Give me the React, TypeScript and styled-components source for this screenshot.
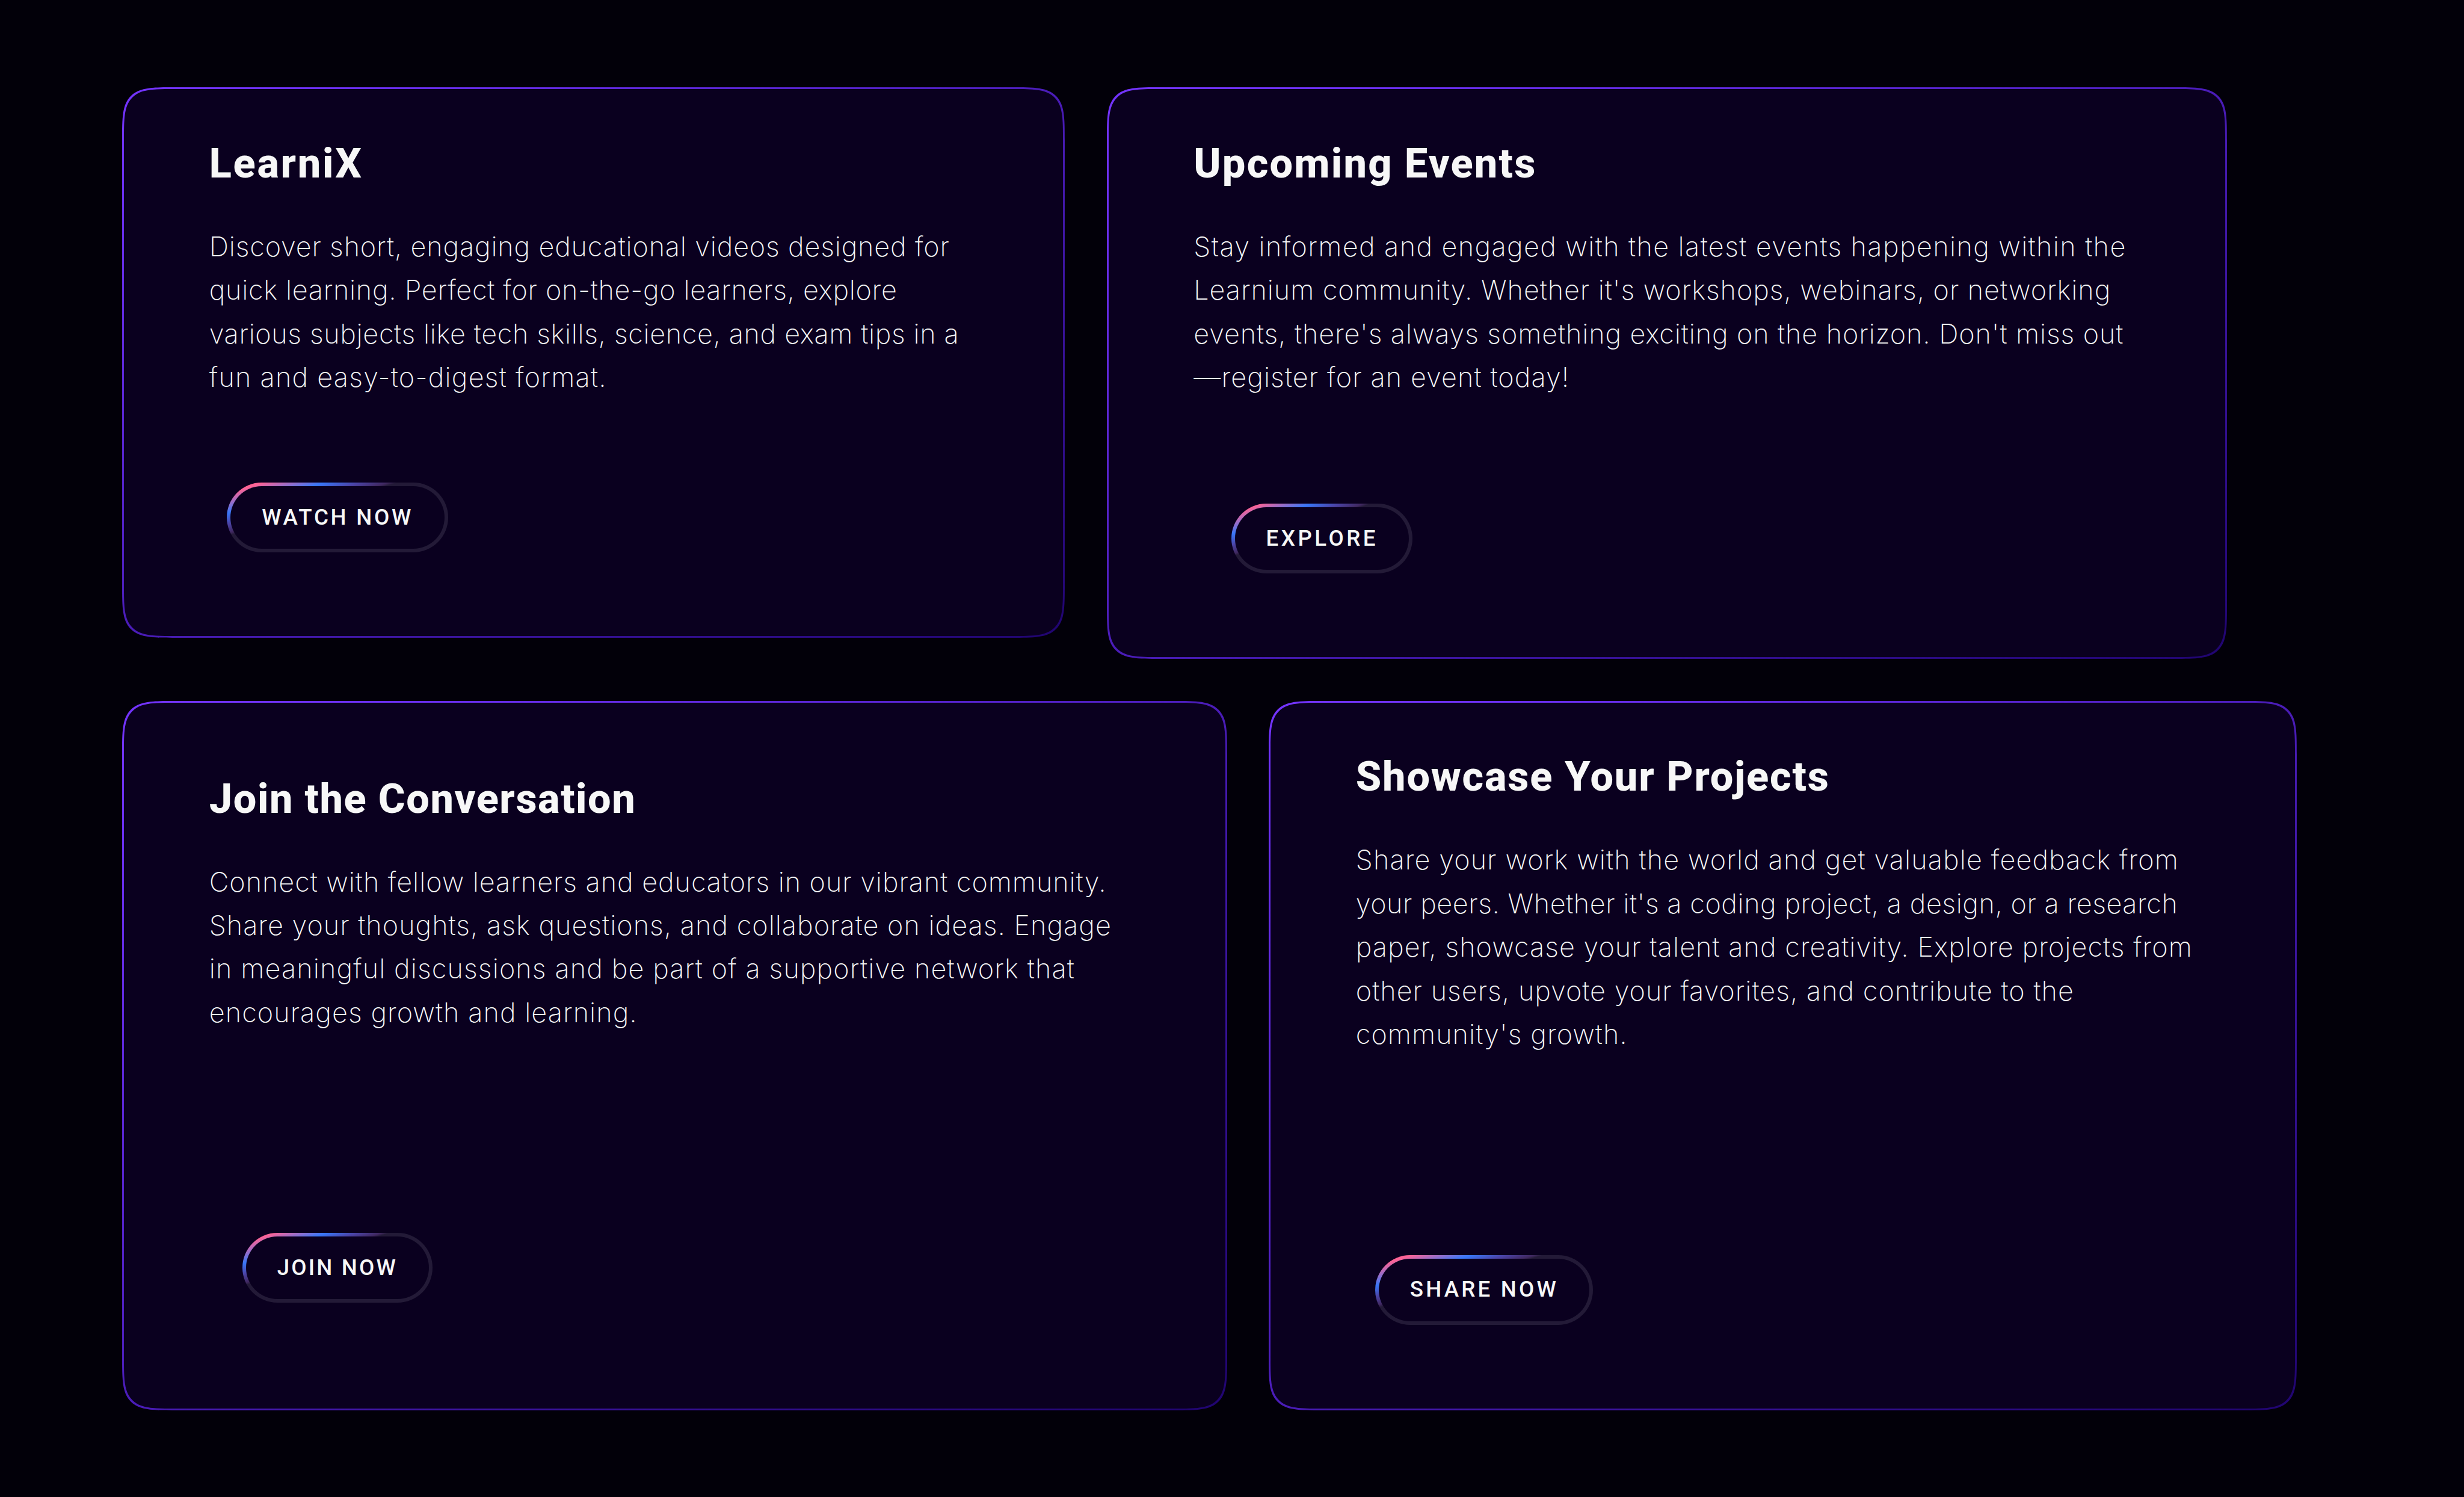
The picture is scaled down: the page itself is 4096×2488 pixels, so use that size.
import React, { useLayoutEffect, useRef, useState } from 'react';
import styled, { createGlobalStyle } from 'styled-components';

const GlobalStyle = createGlobalStyle`
  * {
    box-sizing: border-box;
  }

  body {
    margin: 0;
    background: #020009;
    color: #f7f7f7;
    overflow: hidden;
  }
`;

const Page = styled.main`
  display: flex;
  flex-direction: column;
  gap: 69.5px;
  min-height: 2488px;
  padding: 145px 0 0 203px;
`;

const Row = styled.div`
  display: flex;
  align-items: flex-start;
  gap: 69.5px;
`;

const Card = styled.section<{ $width: number; $height: number; $inset: number }>`
  display: flex;
  flex-direction: column;
  align-items: flex-start;
  width: ${(p) => p.$width}px;
  height: ${(p) => p.$height}px;
  padding: ${(p) => 83.8 + p.$inset}px 0 ${(p) => 139 + p.$inset}px 141.8px;
  border: 3px solid transparent;
  border-radius: 91px;
  corner-shape: squircle;
  background:
    linear-gradient(#0a001f, #0a001f) padding-box,
    linear-gradient(to bottom right, #7434ff, #200470) border-box;
`;

const Title = styled.h2`
  margin: 0 0 62px;
  font-family: Roboto, sans-serif;
  font-size: 68.5px;
  font-weight: 800;
  line-height: 80px;
`;

const Text = styled.p`
  margin: 0;
  font-family: Inter, sans-serif;
  font-size: 45px;
  font-weight: 200;
  line-height: 72.42px;
`;

const Button = styled.button<{ $width: number; $offset: number }>`
  display: flex;
  align-items: center;
  justify-content: center;
  width: ${(p) => p.$width}px;
  height: 116px;
  margin: auto 0 0 ${(p) => p.$offset}px;
  padding: 0 3px 1px 0;
  border: 6px solid transparent;
  border-radius: 58px;
  background:
    linear-gradient(#0a001f, #0a001f) padding-box,
    linear-gradient(
        to bottom right,
        #ff6395 8%,
        #3877f8 22%,
        #4b43a6 30%,
        #402860 36.5%,
        #231a37 38.5%
      )
      border-box;
  color: #f7f7f7;
  font-family: Roboto, sans-serif;
  font-size: 36.7px;
  font-weight: 500;
  line-height: 44px;
  text-transform: uppercase;
  cursor: pointer;
`;

const Line = styled.span<{ $width: number }>`
  display: block;
  width: ${(p) => p.$width}px;
  text-align: left;
  white-space: nowrap;
`;

interface FitLineProps {
  text: string;
  width: number;
}

// Spreads the letters so that the text fills exactly the given width
function FitLine({ text, width }: FitLineProps) {
  const ref = useRef<HTMLSpanElement>(null);
  const [spacing, setSpacing] = useState(0);

  useLayoutEffect(() => {
    if (!ref.current) return;
    const natural = ref.current.getBoundingClientRect().width;
    setSpacing((width - natural) / (text.length - 1));
  }, [text, width]);

  return (
    <Line $width={width}>
      <span ref={ref} style={{ letterSpacing: `${spacing}px` }}>
        {text}
      </span>
    </Line>
  );
}

interface CardData {
  width: number;
  height: number;
  inset: number;
  title: FitLineProps;
  lines: FitLineProps[];
  button: FitLineProps;
  buttonWidth: number;
  buttonOffset: number;
}

const rows: CardData[][] = [
  [
    {
      width: 1567,
      height: 915,
      inset: 0,
      title: { text: 'LearniX', width: 253 },
      lines: [
        { text: 'Discover short, engaging educational videos designed for', width: 1230 },
        { text: 'quick learning. Perfect for on-the-go learners, explore', width: 1143 },
        { text: 'various subjects like tech skills, science, and exam tips in a', width: 1246 },
        { text: 'fun and easy-to-digest format.', width: 660 },
      ],
      button: { text: 'Watch now', width: 248 },
      buttonWidth: 368,
      buttonOffset: 29,
    },
    {
      width: 1862.5,
      height: 950,
      inset: 0,
      title: { text: 'Upcoming Events', width: 568 },
      lines: [
        { text: 'Stay informed and engaged with the latest events happening within the', width: 1549 },
        { text: "Learnium community. Whether it's workshops, webinars, or networking", width: 1524 },
        { text: "events, there's always something exciting on the horizon. Don't miss out", width: 1545 },
        { text: '—register for an event today!', width: 624 },
      ],
      button: { text: 'Explore', width: 182 },
      buttonWidth: 301,
      buttonOffset: 62.3,
    },
  ],
  [
    {
      width: 1836.5,
      height: 1179,
      inset: 36.2,
      title: { text: 'Join the Conversation', width: 708 },
      lines: [
        { text: 'Connect with fellow learners and educators in our vibrant community.', width: 1491 },
        { text: 'Share your thoughts, ask questions, and collaborate on ideas. Engage', width: 1499 },
        { text: 'in meaningful discussions and be part of a supportive network that', width: 1438 },
        { text: 'encourages growth and learning.', width: 711 },
      ],
      button: { text: 'Join now', width: 197 },
      buttonWidth: 316,
      buttonOffset: 55,
    },
    {
      width: 1709,
      height: 1179,
      inset: 0,
      title: { text: 'Showcase Your Projects', width: 786 },
      lines: [
        { text: 'Share your work with the world and get valuable feedback from', width: 1367 },
        { text: "your peers. Whether it's a coding project, a design, or a research", width: 1366 },
        { text: 'paper, showcase your talent and creativity. Explore projects from', width: 1390 },
        { text: 'other users, upvote your favorites, and contribute to the', width: 1193 },
        { text: "community's growth.", width: 451 },
      ],
      button: { text: 'Share now', width: 243 },
      buttonWidth: 362,
      buttonOffset: 32,
    },
  ],
];

export default function App() {
  return (
    <>
      <GlobalStyle />
      <Page>
        {rows.map((cards, i) => (
          <Row key={i}>
            {cards.map((card) => (
              <Card
                key={card.title.text}
                $width={card.width}
                $height={card.height}
                $inset={card.inset}
              >
                <Title>
                  <FitLine {...card.title} />
                </Title>
                <Text>
                  {card.lines.map((line) => (
                    <FitLine key={line.text} {...line} />
                  ))}
                </Text>
                <Button $width={card.buttonWidth} $offset={card.buttonOffset}>
                  <FitLine {...card.button} />
                </Button>
              </Card>
            ))}
          </Row>
        ))}
      </Page>
    </>
  );
}
